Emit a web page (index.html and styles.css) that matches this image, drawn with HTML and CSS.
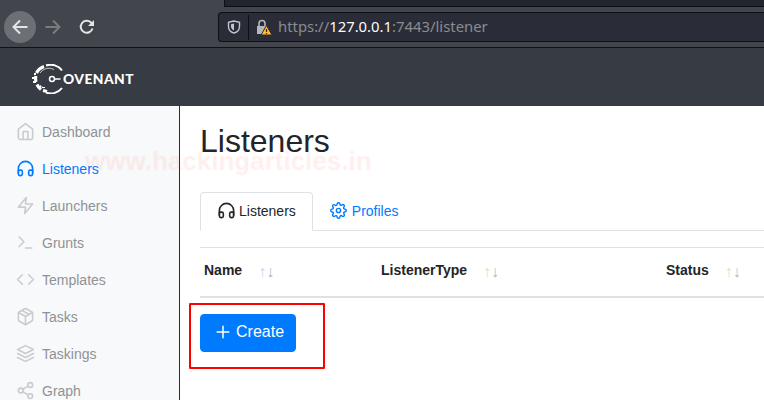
FILE: index.html
```html
<!DOCTYPE html>
<html lang="en">
<head>
<meta charset="utf-8">
<title>Listeners - Covenant</title>
<link rel="stylesheet" href="styles.css">
</head>
<body>
<div class="toolbar">
  <div class="nav-buttons">
    <span class="back">
      <svg width="18" height="18" viewBox="0 0 18 18" class="ico-chrome"><path d="M16.500 9H2.500M9 2.500L2.500 9 9 15.500"/></svg>
    </span>
    <svg width="18" height="18" viewBox="0 0 18 18" class="ico-chrome fwd"><path d="M1.500 9H15M9 2.500L15.500 9 9 15.500"/></svg>
    <svg width="16" height="16" viewBox="0 0 16 16" class="ico-chrome reload"><path d="M13.500 9.500A6 6 0 1 1 12 3.500L14 5.500"/><path class="fill" d="M15 1v6H9z"/></svg>
  </div>
  <div class="addr-col">
    <div class="tab-strip"></div>
    <div class="urlbar">
      <svg width="14" height="14" viewBox="0 0 14 14" class="shield"><path d="M7 1L1.500 2.300v4.200C1.500 10 4 12.200 7 13c3-.8 5.500-3 5.500-6.500V2.300z"/><path class="fill" d="M7 3.500L4 4.300v2.200c0 2 1.300 3.300 3 4z"/></svg>
      <span class="divider"></span>
      <svg width="16" height="16" viewBox="0 0 16 16" class="lock"><path class="body" d="M1 7h10v8H1z"/><path class="hasp" d="M3 7V4.500a3 3 0 0 1 6 0V7"/><path class="warn" d="M10.500 6.500L16 16H5z"/><path class="mark" d="M10.500 10v3M10.500 14v1"/></svg>
      <span class="url">https://<b>127.0.0.1</b>:7443/listener</span>
    </div>
  </div>
</div>

<header class="navbar">
  <div class="logo">
    <svg width="31" height="30" viewBox="0 0 31 30" class="logo-mark">
      <path class="ring-thin" d="M30 6.500A14 14 0 0 0 14 1.500M14 28.500A14 14 0 0 0 30 24"/>
      <path class="ring-rough" d="M12 2.500A13 13 0 0 0 4.500 9M3.800 12A13 13 0 0 0 4 18M5 20.500A13 13 0 0 0 9 25.500M11 26.500L15 27.500"/>
      <path class="ring-inner" d="M22 5.500A10.500 10.500 0 0 0 8 9M8 21A10.500 10.500 0 0 0 12 24"/>
      <path class="key" d="M23 15h5.500"/>
      <circle class="hub" cx="20" cy="15" r="2.500"/>
      <path class="bits" d="M0 13h3v2H0zM2 9h2v2H2zM1 17h3v2H1zM6 22h3v2H6zM10 23h3v1h-3zM5 5h2v2H5zM9 2h2v2H9z"/>
    </svg>
    <span class="logo-text">OVENANT</span>
  </div>
</header>

<div class="main">
  <nav class="sidebar">
    <a class="side-item"><svg class="ico" viewBox="0 0 24 24"><path d="M3 9l9-7 9 7v11a2 2 0 0 1-2 2H5a2 2 0 0 1-2-2z"/><path d="M9 22V12h6v10"/></svg>Dashboard</a>
    <a class="side-item active"><svg class="ico" viewBox="0 0 24 24"><path d="M3 18v-6a9 9 0 0 1 18 0v6"/><path d="M21 19a2 2 0 0 1-2 2h-1a2 2 0 0 1-2-2v-3a2 2 0 0 1 2-2h3zM3 19a2 2 0 0 0 2 2h1a2 2 0 0 0 2-2v-3a2 2 0 0 0-2-2H3z"/></svg>Listeners</a>
    <a class="side-item"><svg class="ico" viewBox="0 0 24 24"><path d="M13 2L3 14h9l-1 8 10-12h-9z"/></svg>Launchers</a>
    <a class="side-item"><svg class="ico" viewBox="0 0 24 24"><path d="M4 17l6-6-6-6M12 19h8"/></svg>Grunts</a>
    <a class="side-item"><svg class="ico" viewBox="0 0 24 24"><path d="M16 18l6-6-6-6M8 6l-6 6 6 6"/></svg>Templates</a>
    <a class="side-item"><svg class="ico" viewBox="0 0 24 24"><path d="M16.500 9.400l-9-5.190M21 16V8a2 2 0 0 0-1-1.730l-7-4a2 2 0 0 0-2 0l-7 4A2 2 0 0 0 3 8v8a2 2 0 0 0 1 1.730l7 4a2 2 0 0 0 2 0l7-4A2 2 0 0 0 21 16z"/><path d="M3.270 6.960L12 12.010l8.730-5.050M12 22.080V12"/></svg>Tasks</a>
    <a class="side-item"><svg class="ico" viewBox="0 0 24 24"><path d="M12 2L2 7l10 5 10-5zM2 17l10 5 10-5M2 12l10 5 10-5"/></svg>Taskings</a>
    <a class="side-item"><svg class="ico" viewBox="0 0 24 24"><circle cx="18" cy="5" r="3"/><circle cx="6" cy="12" r="3"/><circle cx="18" cy="19" r="3"/><path d="M8.590 13.510l6.830 3.980M15.410 6.510l-6.820 3.980"/></svg>Graph</a>
  </nav>

  <main class="content">
    <h1 class="title">Listeners</h1>
    <ul class="tabs">
      <li class="tab current"><svg class="ico ico-head" viewBox="0 0 24 24"><path d="M3 18v-6a9 9 0 0 1 18 0v6"/><path d="M21 19a2 2 0 0 1-2 2h-1a2 2 0 0 1-2-2v-3a2 2 0 0 1 2-2h3zM3 19a2 2 0 0 0 2 2h1a2 2 0 0 0 2-2v-3a2 2 0 0 0-2-2H3z"/></svg>Listeners</li>
      <li class="tab"><svg class="ico ico-gear" viewBox="0 0 24 24"><circle cx="12" cy="12" r="3"/><path d="M19.400 15a1.650 1.650 0 0 0 .33 1.820l.06.06a2 2 0 0 1 0 2.830 2 2 0 0 1-2.830 0l-.06-.06a1.650 1.650 0 0 0-1.820-.33 1.650 1.650 0 0 0-1 1.510V21a2 2 0 0 1-2 2 2 2 0 0 1-2-2v-.09A1.650 1.650 0 0 0 9 19.400a1.650 1.650 0 0 0-1.820.33l-.06.06a2 2 0 0 1-2.830 0 2 2 0 0 1 0-2.830l.06-.06a1.650 1.650 0 0 0 .33-1.820 1.650 1.650 0 0 0-1.510-1H3a2 2 0 0 1-2-2 2 2 0 0 1 2-2h.09A1.650 1.650 0 0 0 4.600 9a1.650 1.650 0 0 0-.33-1.820l-.06-.06a2 2 0 0 1 0-2.830 2 2 0 0 1 2.830 0l.06.06a1.650 1.650 0 0 0 1.820.33H9a1.650 1.650 0 0 0 1-1.510V3a2 2 0 0 1 2-2 2 2 0 0 1 2 2v.09a1.650 1.650 0 0 0 1 1.510 1.650 1.650 0 0 0 1.820-.33l.06-.06a2 2 0 0 1 2.830 0 2 2 0 0 1 0 2.830l-.06.06a1.650 1.650 0 0 0-.33 1.820V9a1.650 1.650 0 0 0 1.510 1H21a2 2 0 0 1 2 2 2 2 0 0 1-2 2h-.09a1.650 1.650 0 0 0-1.510 1z"/></svg>Profiles</li>
    </ul>
    <div class="thead">
      <div class="th th-name">Name<span class="sort"><i class="up">↑</i>↓</span></div>
      <div class="th th-type">ListenerType<span class="sort warm"><i class="up">↑</i>↓</span></div>
      <div class="th th-status">Status<span class="sort warm"><i class="up">↑</i>↓</span></div>
    </div>
    <button class="create"><svg class="plus" viewBox="0 0 24 24"><path d="M12 5v14M5 12h14"/></svg>Create</button>
  </main>
</div>

<div class="highlight"></div>
<div class="watermark">www.hackingarticles.in</div>
</body>
</html>
```

FILE: styles.css
```css
* { box-sizing: border-box; }
html, body { margin: 0; height: 400px; overflow: hidden; }
body {
  position: relative;
  display: flex;
  flex-direction: column;
  font-family: "Liberation Sans", Arial, sans-serif;
  font-size: 14px;
  color: #212529;
  background: #fff;
}

/* browser chrome */
.toolbar {
  flex: none;
  height: 48px;
  display: flex;
  background: #42454c;
  border-bottom: 1px solid #101216;
}
.nav-buttons {
  flex: none;
  width: 218px;
  display: flex;
  align-items: center;
  padding: 6px 0 0 4px;
}
.back {
  width: 32px;
  height: 32px;
  border-radius: 50%;
  background: #6c6f75;
  display: flex;
  align-items: center;
  justify-content: center;
}
.ico-chrome { fill: none; stroke: #e4e5e7; stroke-width: 2; }
.ico-chrome .fill { fill: #e4e5e7; stroke: none; }
.fwd { margin-left: 8px; stroke: #7a7c81; }
.reload { margin-left: 17px; }
.addr-col { flex: 1; min-width: 0; }
.tab-strip {
  height: 7px;
  margin-left: 6px;
  background: #23252e;
  border-left: 1px solid #0e1014;
  border-bottom: 1px solid #0e1014;
}
.urlbar {
  margin-top: 5px;
  height: 30px;
  display: flex;
  align-items: center;
  padding-left: 8px;
  background: #2a2c37;
  border: 1px solid #0e1014;
  border-right: 0;
  border-radius: 4px 0 0 4px;
}
.shield { flex: none; }
.shield path { fill: none; stroke: #c4c5c9; stroke-width: 1.400; }
.shield .fill { fill: #c4c5c9; stroke: none; }
.divider { width: 1px; height: 25px; margin: 0 6px 0 7px; background: #0e1014; }
.lock { flex: none; margin-left: 1px; }
.lock .body { fill: #b7b8bc; }
.lock .hasp { fill: none; stroke: #b7b8bc; stroke-width: 1.600; }
.lock .warn { fill: #ffbd2e; stroke: #2a2c37; stroke-width: 1; }
.lock .mark { stroke: #3a2c00; stroke-width: 1.200; fill: none; }
.url {
  margin-left: 6px;
  padding-bottom: 2px;
  font-family: "Noto Sans", sans-serif;
  font-size: 14.850px;
  color: #8a8c91;
  white-space: nowrap;
}
.url b { font-weight: 400; color: #fbfbfe; }

/* app navbar */
.navbar {
  flex: none;
  height: 58px;
  background: #373b43;
  display: flex;
  align-items: center;
  padding-left: 32px;
}
.logo { display: flex; align-items: center; padding-top: 3px; }
.logo-mark { flex: none; }
.ring-thin { fill: none; stroke: #fff; stroke-width: 2; }
.ring-rough { fill: none; stroke: #fff; stroke-width: 3.200; }
.ring-inner { fill: none; stroke: #fff; stroke-width: 1; opacity: .7; }
.key { stroke: #fff; stroke-width: 1.500; }
.hub { fill: #373b43; stroke: #fff; stroke-width: 1.500; }
.bits { fill: #fff; }
.logo-text {
  font-family: Lato, sans-serif;
  font-weight: 900;
  font-size: 13.800px;
  letter-spacing: .45px;
  color: #fff;
}

/* layout */
.main { flex: 1; min-height: 0; display: flex; }
.sidebar {
  flex: none;
  width: 180px;
  padding-top: 7px;
  background: #f8f9fa;
  border-right: 1px solid #292b30;
}
.side-item {
  height: 37px;
  display: flex;
  align-items: center;
  padding-left: 16px;
  color: #8f9297;
}
.ico {
  flex: none;
  width: 19px;
  height: 19px;
  margin-right: 7px;
  fill: none;
  stroke: #c9cbcd;
  stroke-width: 2;
  stroke-linecap: round;
  stroke-linejoin: round;
}
.active { color: #007bff; }
.active .ico { stroke: #007bff; }

.content { flex: 1; min-width: 0; padding: 0 0 0 20px; }
.title {
  margin: 15px 0 0;
  height: 41px;
  font-size: 32px;
  line-height: 41px;
  font-weight: 400;
}
.tabs {
  list-style: none;
  display: flex;
  margin: 30px 0 0;
  padding: 0;
  height: 39px;
  border-bottom: 1px solid #dee2e6;
}
.tab {
  height: 39px;
  display: flex;
  align-items: center;
  padding: 0 16px 2px 16px;
  color: #007bff;
  border: 1px solid transparent;
}
.tab .ico { stroke: #007bff; }
.tab .ico-head { width: 19px; height: 19px; margin-right: 3px; }
.tab .ico-gear { width: 17px; height: 17px; margin: 0 5px 0 0; }
.tab.current {
  color: #212529;
  background: #fff;
  border-color: #dee2e6 #dee2e6 #fff;
  border-radius: 4px 4px 0 0;
}
.tab.current .ico { stroke: #212529; }

.thead {
  margin-top: 16px;
  height: 51px;
  display: flex;
  align-items: center;
  padding-bottom: 4px;
  border-top: 1px solid #dee2e6;
  border-bottom: 2px solid #dee2e6;
  font-weight: 700;
}
.th { display: flex; align-items: center; padding-left: 4px; flex: none; }
.th-name { width: 177px; }
.th-type { width: 285px; }
.sort {
  font-weight: 400;
  font-size: 16px;
  color: #aeb6c4;
  margin-top: 3px;
}
.sort .up { font-style: normal; color: #ccd3de; }
.th-name .sort { margin-left: 16px; }
.th-type .sort { margin-left: 16px; }
.th-status .sort { margin-left: 16px; }
.sort.warm { color: #b4bac4; }
.sort.warm .up { color: #e8d9c6; }

.create {
  margin-top: 16px;
  width: 96px;
  height: 38px;
  display: flex;
  align-items: center;
  padding: 0 0 2px 12px;
  background: #007bff;
  color: #fff;
  border: 1px solid #007bff;
  border-radius: 4px;
  font: 16px "Liberation Sans", Arial, sans-serif;
}
.plus {
  flex: none;
  width: 20px;
  height: 20px;
  margin-right: 3px;
  fill: none;
  stroke: #fff;
  stroke-width: 1.800;
  stroke-linecap: round;
}

/* overlays on top of the page */
.highlight {
  position: absolute;
  left: 189px;
  top: 303px;
  width: 136px;
  height: 66px;
  border: 2px solid #f00;
  border-radius: 1px;
}
.watermark {
  position: absolute;
  left: 85px;
  top: 146px;
  font-size: 26px;
  font-weight: 700;
  color: rgba(255, 50, 50, .045);
  text-shadow: 0 0 2px rgba(255, 50, 50, .05);
  white-space: nowrap;
}
```
